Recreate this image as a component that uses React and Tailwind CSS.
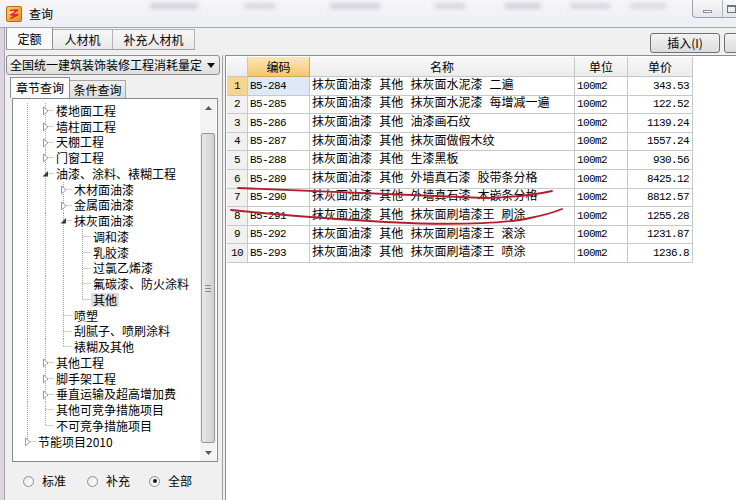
import React from 'react'

const tree = [
  { t: '楼地面工程', l: 1, c: 1 },
  { t: '墙柱面工程', l: 1, c: 1 },
  { t: '天棚工程', l: 1, c: 1 },
  { t: '门窗工程', l: 1, c: 1 },
  { t: '油漆、涂料、裱糊工程', l: 1, c: 1, open: 1 },
  { t: '木材面油漆', l: 2, c: 1 },
  { t: '金属面油漆', l: 2, c: 1 },
  { t: '抹灰面油漆', l: 2, c: 1, open: 1 },
  { t: '调和漆', l: 3 },
  { t: '乳胶漆', l: 3 },
  { t: '过氯乙烯漆', l: 3 },
  { t: '氟碳漆、防火涂料', l: 3 },
  { t: '其他', l: 3, sel: 1 },
  { t: '喷塑', l: 2 },
  { t: '刮腻子、喷刷涂料', l: 2 },
  { t: '裱糊及其他', l: 2 },
  { t: '其他工程', l: 1, c: 1 },
  { t: '脚手架工程', l: 1, c: 1 },
  { t: '垂直运输及超高增加费', l: 1, c: 1 },
  { t: '其他可竞争措施项目', l: 1 },
  { t: '不可竞争措施项目', l: 1 },
  { t: '节能项目2010', l: 0, c: 1 },
]

// guide line x positions, relative to the tree's content edge (page x 13)
const X = [14.5, 32.5, 50.5, 69.5]
const ROW_H = 15.75

function hasNext(i) {
  const l = tree[i].l
  for (let j = i + 1; j < tree.length; j++) {
    if (tree[j].l < l) return false
    if (tree[j].l === l) return true
  }
  return false
}

function ancestorHasNext(i, k) {
  for (let j = i - 1; j >= 0; j--) {
    if (tree[j].l === k) return hasNext(j)
  }
  return true
}

function Guides({ i }) {
  const n = tree[i]
  const w = Math.round(X[n.l]) + 8
  const cy = ROW_H / 2
  const x = X[n.l]
  const lines = []
  for (let k = 0; k < n.l; k++) {
    if (ancestorHasNext(i, k)) {
      lines.push(<line key={'v' + k} x1={X[k]} y1={0} x2={X[k]} y2={ROW_H} />)
    }
  }
  lines.push(<line key="own" x1={x} y1={0} x2={x} y2={hasNext(i) ? ROW_H : cy} />)
  lines.push(<line key="h" x1={x} y1={Math.floor(cy) + 0.5} x2={w} y2={Math.floor(cy) + 0.5} />)
  return (
    <svg width={w} height={ROW_H} className="shrink-0">
      <g stroke="#a3a3a3" strokeWidth="1" strokeDasharray="1 1">{lines}</g>
      {n.c && !n.open && (
        <polygon
          points={`${x - 2},${cy - 4} ${x + 2.5},${cy} ${x - 2},${cy + 4}`}
          fill="#ffffff"
          stroke="#9a9a9a"
          strokeWidth="1"
        />
      )}
      {n.c && n.open && (
        <polygon points={`${x + 2.5},${cy - 3} ${x + 2.5},${cy + 2.5} ${x - 3},${cy + 2.5}`} fill="#3a3a3a" />
      )}
    </svg>
  )
}

const rows = [
  ['B5-284', '抹灰面油漆 其他 抹灰面水泥漆 二遍', '343.53'],
  ['B5-285', '抹灰面油漆 其他 抹灰面水泥漆 每增减一遍', '122.52'],
  ['B5-286', '抹灰面油漆 其他 油漆画石纹', '1139.24'],
  ['B5-287', '抹灰面油漆 其他 抹灰面做假木纹', '1557.24'],
  ['B5-288', '抹灰面油漆 其他 生漆黑板', '930.56'],
  ['B5-289', '抹灰面油漆 其他 外墙真石漆 胶带条分格', '8425.12'],
  ['B5-290', '抹灰面油漆 其他 外墙真石漆 木嵌条分格', '8812.57'],
  ['B5-291', '抹灰面油漆 其他 抹灰面刷墙漆王 刷涂', '1255.28'],
  ['B5-292', '抹灰面油漆 其他 抹灰面刷墙漆王 滚涂', '1231.87'],
  ['B5-293', '抹灰面油漆 其他 抹灰面刷墙漆王 喷涂', '1236.8'],
]

const mono = "font-['Liberation_Mono','Noto_Sans_CJK_SC',monospace] text-[11px] tracking-[-0.6px]"

function Radio({ label, checked, w }) {
  return (
    <div className={`flex items-center ${w}`}>
      <span className="w-[11px] h-[11px] rounded-full border border-[#8f8f8f] bg-gradient-to-br from-[#e6e6e6] to-white flex items-center justify-center shrink-0">
        {checked && <span className="w-[4px] h-[4px] rounded-full bg-[#1a1a1a]" />}
      </span>
      <span className="ml-[8px] leading-[14px]">{label}</span>
    </div>
  )
}

export default function App() {
  return (
    <div className="relative w-[736px] h-[500px] overflow-hidden bg-white text-black text-[12px] font-['Noto_Sans_CJK_SC',sans-serif]">

      {/* title bar */}
      <div className="relative h-[27px] flex items-start bg-gradient-to-b from-[#f6f5f9] to-[#eceef4]">
        <div className="absolute inset-0 pointer-events-none blur-[2px] opacity-60">
          <div className="absolute left-[150px] top-[3px] w-[48px] h-[6px] bg-[#b9bcc4]" />
          <div className="absolute left-[245px] top-[3px] w-[30px] h-[6px] bg-[#c2c4cb]" />
          <div className="absolute left-[330px] top-[3px] w-[50px] h-[6px] bg-[#b9bcc4]" />
          <div className="absolute left-[435px] top-[3px] w-[30px] h-[6px] bg-[#c2c4cb]" />
          <div className="absolute left-[505px] top-[3px] w-[36px] h-[6px] bg-[#b9bcc4]" />
          <div className="absolute left-[570px] top-[3px] w-[40px] h-[6px] bg-[#c2c4cb]" />
          <div className="absolute left-[630px] top-[3px] w-[36px] h-[6px] bg-[#c8cad0]" />
        </div>
        <svg width="16" height="16" viewBox="0 0 16 16" className="relative ml-[6px] mt-[6px] shrink-0">
          <defs>
            <linearGradient id="ic" x1="0" y1="0" x2="1" y2="1">
              <stop offset="0" stopColor="#fcd36a" />
              <stop offset="1" stopColor="#e88a1c" />
            </linearGradient>
          </defs>
          <rect x="0.5" y="0.5" width="15" height="15" rx="1.5" fill="url(#ic)" stroke="#c06a10" />
          <path d="M4 4.5 L11.5 4 L5 9 L12 8.5 L4.5 12.5" fill="none" stroke="#d8283c" strokeWidth="1.6" strokeLinejoin="round" />
          <path d="M3.5 7 L8 5.5" stroke="#ffffff" strokeWidth="1" />
        </svg>
        <span className="relative ml-[7px] mt-[6px] leading-[16px]">查询</span>
        <div className="relative ml-auto w-[44px] h-[18px] flex items-center border-l border-b border-[#9ea3ab] rounded-bl-[4px] bg-gradient-to-b from-[#f8f8fa] to-[#e3e6ec]">
          <span className="ml-[10px] mt-[6px] w-[9px] h-[3px] border border-[#8d939c] bg-white" />
          <span className="ml-[10px] h-full border-l border-[#b0b4bb]" />
          <span className="ml-[4px] w-[9px] h-[8px] border border-[#6d737c] border-t-2" />
        </div>
      </div>

      {/* window body */}
      <div className="flex h-[473px] border-t border-[#a7a9ae]">
        <div className="w-[5px] shrink-0 bg-[#ddd3e3] border-r border-[#a6a6a6]" />

        <div className="flex-1 min-w-0 overflow-hidden flex flex-col bg-[#f0f0f0]">

          {/* tabs + buttons */}
          <div className="h-[27px] flex items-start">
            <div className="ml-[1px] flex items-end h-[22px] shrink-0 border-b border-[#a0a0a0]">
              <div className="w-[47px] h-[22px] flex items-center justify-center border border-b-0 border-[#8c8f96] bg-[#fafafa] rounded-t-[2px]">
                定额
              </div>
              <div className="w-[60px] h-[20px] flex items-center justify-center border-t border-r border-[#b3b3b3] bg-gradient-to-b from-[#f7f7f7] to-[#e9e9e9]">
                人材机
              </div>
              <div className="w-[82px] h-[20px] flex items-center justify-center border-t border-r border-[#b3b3b3] bg-gradient-to-b from-[#f7f7f7] to-[#e9e9e9]">
                补充人材机
              </div>
            </div>
            <div className="ml-[455px] mt-[5px] flex shrink-0">
              <div className="w-[70px] h-[20px] flex items-center justify-center rounded-[3px] border border-[#707070] bg-gradient-to-b from-[#f3f3f3] to-[#dcdcdc] shrink-0">
                插入(I)
              </div>
              <div className="ml-[4px] w-[60px] h-[20px] rounded-[3px] border border-[#707070] bg-gradient-to-b from-[#f3f3f3] to-[#dcdcdc] shrink-0" />
            </div>
          </div>

          <div className="flex flex-1">

            {/* left panel */}
            <div className="w-[218px] shrink-0 flex flex-col border-r border-[#a0a0a0]">
              <div className="ml-[1px] w-[214px] h-[20px] flex items-center rounded-[3px] border border-[#8e8f8f] bg-gradient-to-b from-[#f4f4f4] to-[#dedede]">
                <span className="pl-[3px] leading-[14px] whitespace-nowrap">全国统一建筑装饰装修工程消耗量定</span>
                <svg width="8" height="5" viewBox="0 0 8 5" className="ml-auto mr-[4px]">
                  <polygon points="0,0 8,0 4,5" fill="#111111" />
                </svg>
              </div>

              <div className="ml-[5px] mt-[2px] h-[21px] flex items-end">
                <div className="w-[60px] h-[21px] flex items-center justify-center border border-b-0 border-[#8c8f96] bg-[#fafafa]">
                  章节查询
                </div>
                <div className="w-[56px] h-[18px] flex items-center justify-center border-t border-r border-[#a6a6a6] bg-gradient-to-b from-[#efefef] to-[#dcdcdc]">
                  条件查询
                </div>
              </div>

              <div className="ml-[7px] w-[206px] h-[364px] flex border border-[#828790] bg-white">
                <div className="flex-1 pt-[4px] overflow-hidden">
                  {tree.map((n, i) => (
                    <div key={i} className="flex items-center h-[15.75px]">
                      <Guides i={i} />
                      <span className={`px-[2px] leading-[14px] whitespace-nowrap ${n.sel ? 'bg-[#dedede]' : ''}`}>{n.t}</span>
                    </div>
                  ))}
                </div>
                <div className="w-[16px] mr-[1px] flex flex-col bg-[#f3f3f3]">
                  <div className="h-[17px] flex items-center justify-center">
                    <svg width="7" height="4" viewBox="0 0 7 4"><polygon points="0,4 7,4 3.5,0" fill="#5a5a5a" /></svg>
                  </div>
                  <div className="h-[17px]" />
                  <div className="h-[310px] mx-[1px] rounded-[2px] border border-[#979797] bg-gradient-to-r from-[#e9e9e9] via-[#dcdcdc] to-[#cfcfcf] flex flex-col items-center justify-center gap-[2px]">
                    <span className="w-[6px] h-[1px] bg-[#8a8a8a]" />
                    <span className="w-[6px] h-[1px] bg-[#8a8a8a]" />
                    <span className="w-[6px] h-[1px] bg-[#8a8a8a]" />
                  </div>
                  <div className="flex-1" />
                  <div className="h-[16px] flex items-center justify-center">
                    <svg width="7" height="4" viewBox="0 0 7 4"><polygon points="0,0 7,0 3.5,4" fill="#5a5a5a" /></svg>
                  </div>
                </div>
              </div>

              <div className="flex-1 flex items-center pl-[18px]">
                <Radio label="标准" w="w-[64px]" />
                <Radio label="补充" w="w-[62px]" />
                <Radio label="全部" checked w="" />
              </div>
            </div>

            {/* grid pane */}
            <div className="flex-1 min-w-0 ml-[2px] border-l border-t border-[#8a8d94] bg-white">
              <div className="mt-[1px] ml-[1px] grid grid-cols-[21px_62px_265px_53px_65px]">
                <div className="h-[20px] border-r border-b border-[#c6c6c6] bg-gradient-to-b from-[#f8f8f8] to-[#ececec]" />
                <div className="h-[20px] border-r border-b border-[#d4a85a] bg-gradient-to-b from-[#fde7b6] to-[#f5c66e] flex items-center justify-center">编码</div>
                <div className="h-[20px] border-r border-b border-[#c6c6c6] bg-gradient-to-b from-[#f8f8f8] to-[#ececec] flex items-center justify-center">名称</div>
                <div className="h-[20px] border-r border-b border-[#c6c6c6] bg-gradient-to-b from-[#f8f8f8] to-[#ececec] flex items-center justify-center">单位</div>
                <div className="h-[20px] border-r border-b border-[#c6c6c6] bg-gradient-to-b from-[#f8f8f8] to-[#ececec] flex items-center justify-center">单价</div>

                {rows.map((r, i) => (
                  <React.Fragment key={i}>
                    <div className={`h-[18.6px] border-r border-b border-[#c8c8c8] flex items-center justify-center ${mono} ${i === 0 ? 'bg-[#f8d48f]' : 'bg-[#f1f1f1]'}`}>{i + 1}</div>
                    <div className={`h-[18.6px] border-r border-b border-[#c8c8c8] flex items-center pl-[2px] ${mono} ${i === 0 ? 'bg-[#dde9f7]' : ''}`}>{r[0]}</div>
                    <div className="h-[18.6px] border-r border-b border-[#c8c8c8] flex items-center pl-[2px] whitespace-pre font-['Liberation_Mono','Noto_Sans_CJK_SC',monospace] text-[12px]">{r[1]}</div>
                    <div className={`h-[18.6px] border-r border-b border-[#c8c8c8] flex items-center pl-[2px] ${mono}`}>100m2</div>
                    <div className={`h-[18.6px] border-r border-b border-[#c8c8c8] flex items-center justify-end pr-[3px] ${mono}`}>{r[2]}</div>
                  </React.Fragment>
                ))}
              </div>
            </div>
          </div>
        </div>
      </div>

      {/* red ink marks drawn over the grid */}
      <svg width="736" height="500" className="absolute left-0 top-0 pointer-events-none">
        <g fill="none" stroke="#b01e2c" strokeWidth="1.8" strokeLinecap="round" strokeLinejoin="round">
          <path d="M238 188 Q 360 193 485 198 Q 525 197 552 191" />
          <path d="M231 210 Q 330 220 420 223.5 Q 500 225 530 218 Q 550 214 562 209" />
        </g>
      </svg>
    </div>
  )
}
